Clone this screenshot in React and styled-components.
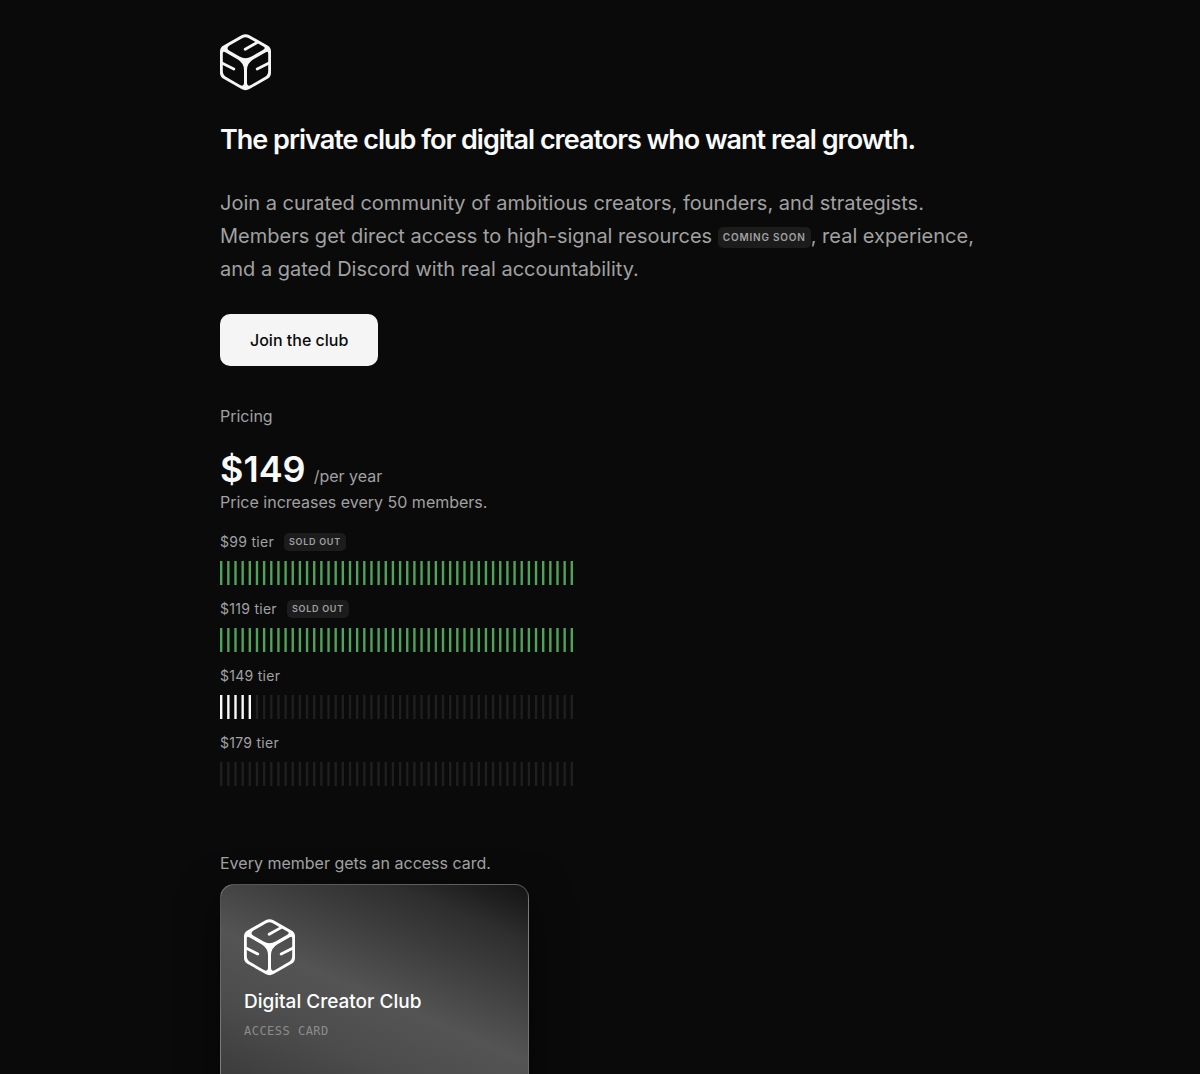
import React from "react";
import styled, { createGlobalStyle } from "styled-components";

const GlobalStyle = createGlobalStyle`
  *, *::before, *::after { box-sizing: border-box; }
  html { background: #0a0a0a; scrollbar-width: none; }
  body {
    margin: 0;
    background: #0a0a0a;
    color: #a1a1a1;
    font-family: Inter, "Liberation Sans", sans-serif;
    -webkit-font-smoothing: antialiased;
  }
  h1, h2, p { margin: 0; }
`;

const Page = styled.main`
  max-width: 808px;
  margin: 0 auto;
  padding: 34px 24px 48px;
`;

const LogoSvg = styled.svg`
  display: block;
  width: 51px;
  height: 57px;
  color: ${(p) => p.$color};
`;

const Heading = styled.h1`
  margin-top: 29px;
  font-size: 27px;
  line-height: 40px;
  font-weight: 600;
  letter-spacing: -1px;
  color: #fafafa;
`;

const Lead = styled.p`
  margin-top: 27px;
  font-size: 20px;
  line-height: 33px;
`;

const Badge = styled.span`
  display: inline-block;
  padding: 0 5px;
  border-radius: 5px;
  background: #1c1c1c;
  color: #a1a1a1;
  font-size: ${(p) => (p.$small ? 9 : 10)}px;
  line-height: ${(p) => (p.$small ? 18 : 21)}px;
  font-weight: 600;
  letter-spacing: 0.08em;
  text-transform: uppercase;
  vertical-align: 2px;
`;

const JoinButton = styled.button`
  display: block;
  margin-top: 28px;
  padding: 0 30px;
  height: 52px;
  border: 0;
  border-radius: 10px;
  background: #f5f5f5;
  color: #0a0a0a;
  font: 500 16px/24px Inter, "Liberation Sans", sans-serif;
  cursor: pointer;
`;

const Pricing = styled.section`
  margin-top: 38px;
`;

const SectionTitle = styled.h2`
  font-size: 16px;
  line-height: 24px;
  font-weight: 400;
`;

const Text = styled.p`
  font-size: 16px;
  line-height: 24px;
`;

const PriceRow = styled.div`
  display: flex;
  align-items: baseline;
  gap: 8px;
  margin-top: 20px;
  font-size: 16px;
  line-height: 24px;
`;

const Price = styled.strong`
  font-size: 36px;
  line-height: 42px;
  font-weight: 600;
  color: #fafafa;
`;

const Tiers = styled.ul`
  display: grid;
  gap: 14px;
  margin: 18px 0 0;
  padding: 0;
  list-style: none;
`;

const TierHead = styled.div`
  display: flex;
  align-items: center;
  gap: 10px;
  height: 20px;
  font-size: 14px;
  line-height: 20px;
  letter-spacing: 0.02em;
`;

const Meter = styled.svg`
  display: block;
  width: 353px;
  max-width: 100%;
  height: 24px;
  margin-top: 9px;
`;

const Access = styled.section`
  margin-top: 65px;
`;

const Card = styled.article`
  width: 309px;
  max-width: 100%;
  min-height: 440px;
  margin-top: 9px;
  padding: 34px 23px;
  border: 1px solid rgba(255, 255, 255, 0.25);
  border-radius: 14px;
  background: linear-gradient(
    203deg,
    #141414 0%,
    #202020 5%,
    #2e2e2e 10%,
    #3a3a3a 17%,
    #474747 24%,
    #545454 31%,
    #4c4c4c 43%,
    #3a3a3a 58%,
    #1c1c1c 100%
  );
  box-shadow: 0 12px 40px rgba(0, 0, 0, 0.5);
`;

const CardTitle = styled.h2`
  margin-top: 12px;
  font-size: 19px;
  line-height: 28px;
  font-weight: 500;
  color: #fff;
`;

const CardKind = styled.p`
  margin-top: 7px;
  font: 12px/16px "DejaVu Sans Mono", monospace;
  letter-spacing: 0.04em;
  text-transform: uppercase;
  color: #8c8c8c;
`;

function Logo({ color }) {
  return (
    <LogoSvg viewBox="0 0 51 57" $color={color} role="img" aria-label="Digital Creator Club logo">
      <path
        fill="currentColor"
        fillRule="evenodd"
        d="M21.5 1.2Q25.5 -.9 29.5 1.2L47.5 11.4Q51 13.4 51 17.3V38.7Q51 42.7 47.5 44.7L29.5 55.1Q25.5 57.4 21.5 55.1L3.5 44.7Q0 42.7 0 38.7V17.3Q0 13.4 3.5 11.4Z
        M22.7 4L9.9 11.3Q5 14.1 9.9 17L19.5 22.5Q25.5 26 31.5 22.5L43.3 15.8Q46.2 14.1 43.3 12.4L28.3 4Q25.5 2.4 22.7 4Z
        M2.8 19.5Q2.8 16.8 5.2 18.2L17.5 25.2Q24 29 24 36V48.6Q24 53.2 20 50.9L6.3 43.1Q2.8 41.1 2.8 37.1Z
        M48.2 19.5Q48.2 16.8 45.8 18.2L33.5 25.2Q27 29 27 36V48.6Q27 53.2 31 50.9L44.7 43.1Q48.2 41.1 48.2 37.1Z"
      />
      <path
        d="M37 8.6L25.2 15.3M1.4 28.8L13.8 35M49.6 28.8L37.2 35"
        fill="none"
        stroke="currentColor"
        strokeWidth="2.8"
        strokeLinecap="round"
      />
    </LogoSvg>
  );
}

const SEATS = 50;

const TIERS = [
  { name: "$99 tier", sold: 50 },
  { name: "$119 tier", sold: 50 },
  { name: "$149 tier", sold: 5 },
  { name: "$179 tier", sold: 0 },
];

function Tier({ name, sold }) {
  const full = sold === SEATS;
  return (
    <li>
      <TierHead>
        {name}
        {full && <Badge $small>Sold out</Badge>}
      </TierHead>
      <Meter viewBox="0 0 296 20" preserveAspectRatio="none" role="img" aria-label={`${sold} of ${SEATS} taken`}>
        {Array.from({ length: SEATS }, (_, i) => (
          <rect key={i} x={i * 6} width="2" height="20" fill={i >= sold ? "#1f1f1f" : full ? "#4fa35b" : "#fafafa"} />
        ))}
      </Meter>
    </li>
  );
}

export default function App() {
  return (
    <>
      <GlobalStyle />
      <Page>
        <Logo color="#f5f5f5" />
        <Heading>The private club for digital creators who want real growth.</Heading>
        <Lead>
          Join a curated community of ambitious creators, founders, and strategists. Members get direct access to
          high-signal resources <Badge>Coming soon</Badge>, real experience, and a gated Discord with real
          accountability.
        </Lead>
        <JoinButton type="button">Join the club</JoinButton>
        <Pricing>
          <SectionTitle>Pricing</SectionTitle>
          <PriceRow>
            <Price>$149</Price>
            <span>/per year</span>
          </PriceRow>
          <Text>Price increases every 50 members.</Text>
          <Tiers>
            {TIERS.map((tier) => (
              <Tier key={tier.name} {...tier} />
            ))}
          </Tiers>
        </Pricing>
        <Access>
          <Text>Every member gets an access card.</Text>
          <Card>
            <Logo color="#fff" />
            <CardTitle>Digital Creator Club</CardTitle>
            <CardKind>Access card</CardKind>
          </Card>
        </Access>
      </Page>
    </>
  );
}
